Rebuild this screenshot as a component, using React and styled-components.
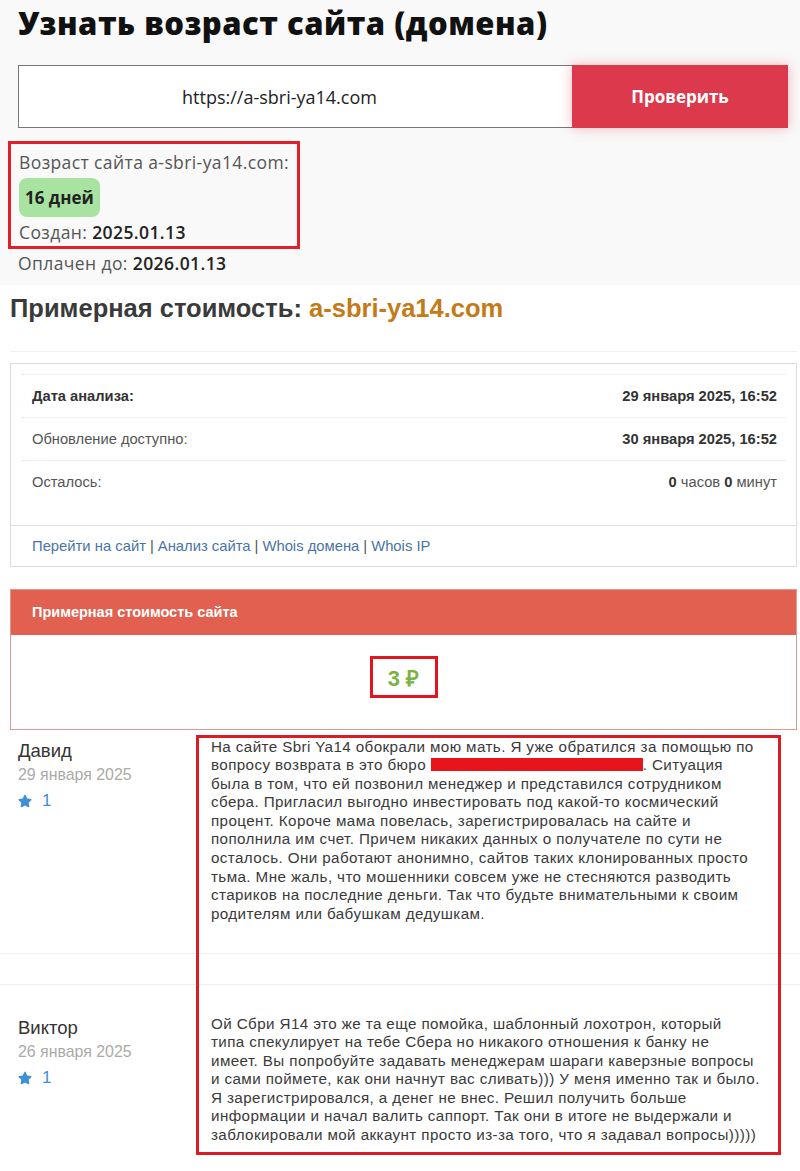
import styled, { createGlobalStyle } from "styled-components";
import { FaStar } from "react-icons/fa";

const GlobalStyle = createGlobalStyle`
  html, body {
    margin: 0;
    padding: 0;
    background: #ffffff;
  }
  * {
    box-sizing: border-box;
  }
`;

const comments = [
  {
    name: "Давид",
    date: "29 января 2025",
    votes: 1,
    top: 8,
    height: 224,
    lines: [
      "На сайте Sbri Ya14 обокрали мою мать. Я уже обратился за помощью по",
      "REDACTED",
      "была в том, что ей позвонил менеджер и представился сотрудником",
      "сбера. Пригласил выгодно инвестировать под какой-то космический",
      "процент. Короче мама повелась, зарегистрировалась на сайте и",
      "пополнила им счет. Причем никаких данных о получателе по сути не",
      "осталось. Они работают анонимно, сайтов таких клонированных просто",
      "тьма. Мне жаль, что мошенники совсем уже не стесняются разводить",
      "стариков на последние деньги. Так что будьте внимательными к своим",
      "родителям или бабушкам дедушкам.",
    ],
  },
  {
    name: "Виктор",
    date: "26 января 2025",
    votes: 1,
    top: 30,
    height: 186,
    lines: [
      "Ой Сбри Я14 это же та еще помойка, шаблонный лохотрон, который",
      "типа спекулирует на тебе Сбера но никакого отношения к банку не",
      "имеет. Вы попробуйте задавать менеджерам шараги каверзные вопросы",
      "и сами поймете, как они начнут вас сливать))) У меня именно так и было.",
      "Я зарегистрировался, а денег не внес. Решил получить больше",
      "информации и начал валить саппорт. Так они в итоге не выдержали и",
      "заблокировали мой аккаунт просто из-за того, что я задавал вопросы)))))",
    ],
  },
];

export default function App() {
  return (
    <Page>
      <GlobalStyle />

      {/* Age checker */}
      <TopSection>
        <Title>Узнать возраст сайта (домена)</Title>
        <SearchForm>
          <UrlInput>https://a-sbri-ya14.com</UrlInput>
          <CheckButton>Проверить</CheckButton>
        </SearchForm>
        <AgeBox>
          <InfoLine>Возраст сайта a-sbri-ya14.com:</InfoLine>
          <AgeBadge>16 дней</AgeBadge>
          <InfoLine>
            Создан: <strong>2025.01.13</strong>
          </InfoLine>
        </AgeBox>
        <PaidLine>
          Оплачен до: <strong>2026.01.13</strong>
        </PaidLine>
      </TopSection>

      {/* Estimated cost */}
      <CostSection>
        <CostTitle>
          Примерная стоимость: <Domain>a-sbri-ya14.com</Domain>
        </CostTitle>
        <Divider />
        <InfoCard>
          <InfoTable>
            <tbody>
              <InfoRow>
                <th>Дата анализа:</th>
                <td>
                  <b>29 января 2025, 16:52</b>
                </td>
              </InfoRow>
              <InfoRow>
                <td>Обновление доступно:</td>
                <td>
                  <b>30 января 2025, 16:52</b>
                </td>
              </InfoRow>
              <InfoRow>
                <td>Осталось:</td>
                <td>
                  <b>0</b> часов <b>0</b> минут
                </td>
              </InfoRow>
            </tbody>
          </InfoTable>
          <CardFooter>
            <a>Перейти на сайт</a> | <a>Анализ сайта</a> | <a>Whois домена</a> |{" "}
            <a>Whois IP</a>
          </CardFooter>
        </InfoCard>

        <PricePanel>
          <PriceHeader>Примерная стоимость сайта</PriceHeader>
          <PriceBody>
            <PriceValue>3 ₽</PriceValue>
          </PriceBody>
        </PricePanel>
      </CostSection>

      {/* Reviews */}
      <Comments>
        {comments.map((c, i) => (
          <div key={i}>
            <Comment $top={c.top} $height={c.height} $last={i === comments.length - 1}>
              <Author>
                <AuthorName>{c.name}</AuthorName>
                <AuthorDate>{c.date}</AuthorDate>
                <Votes>
                  <FaStar />
                  <span>{c.votes}</span>
                </Votes>
              </Author>
              <CommentText>
                {c.lines.map((line, j) =>
                  line === "REDACTED" ? (
                    <div key={j}>
                      вопросу возврата в это бюро <Redacted />. Ситуация
                    </div>
                  ) : (
                    <div key={j}>{line}</div>
                  )
                )}
              </CommentText>
            </Comment>
            {i < comments.length - 1 && <ReplySlot />}
          </div>
        ))}
        <Highlight />
      </Comments>
    </Page>
  );
}

const Page = styled.div`
  width: 800px;
  min-height: 1171px;
  background: #fff;
  font-family: "Liberation Sans", Arial, sans-serif;
  color: #333;
`;

const TopSection = styled.section`
  background: #f9f9f9;
  padding: 5px 12px 10px 18px;
  font-family: "Open Sans", "DejaVu Sans", sans-serif;
`;

const Title = styled.h1`
  margin: 0;
  font-size: 31px;
  line-height: 36px;
  font-weight: 800;
  color: #111;
  letter-spacing: 0.5px;
`;

const SearchForm = styled.div`
  display: flex;
  margin-top: 24px;
  height: 63px;
`;

const UrlInput = styled.div`
  flex: 1;
  display: flex;
  align-items: center;
  justify-content: center;
  background: #fff;
  border: 1px solid #777;
  border-right: none;
  font-size: 18px;
  color: #222;
  padding-right: 32px;
`;

const CheckButton = styled.button`
  width: 216px;
  border: none;
  background: #dc3a4c;
  color: #fff;
  font-family: "Open Sans", sans-serif;
  font-weight: 700;
  font-size: 17px;
  box-shadow: 0 0 12px rgba(230, 60, 70, 0.35);
`;

const AgeBox = styled.div`
  width: 292px;
  margin: 13px 0 0 -10px;
  border: 3px solid #e1202b;
  padding: 6px 8px 2px;
`;

const InfoLine = styled.div`
  font-size: 17.5px;
  letter-spacing: 0.4px;
  line-height: 24px;
  color: #555;
  white-space: nowrap;

  strong {
    color: #222;
    font-weight: 600;
  }
`;

const AgeBadge = styled.div`
  display: inline-flex;
  align-items: center;
  height: 39px;
  margin: 4px 0 3px;
  padding: 0 6px;
  border-radius: 8px;
  background: #a8e3a1;
  font-size: 17px;
  font-weight: 700;
  color: #222;
`;

const PaidLine = styled(InfoLine)`
  margin-top: 2px;
`;

const CostSection = styled.section`
  padding: 0 3px 0 10px;
`;

const CostTitle = styled.h2`
  margin: 0;
  padding-top: 9px;
  font-size: 25.5px;
  line-height: 28px;
  font-weight: 700;
  color: #3a3a3a;
`;

const Domain = styled.span`
  color: #c47a16;
`;

const Divider = styled.hr`
  margin: 29px 0 11px;
  border: none;
  border-top: 1px solid #f0f0f0;
`;

const InfoCard = styled.div`
  border: 1px solid #ddd;
  padding-top: 10px;
`;

const InfoTable = styled.table`
  width: calc(100% - 20px);
  margin: 0 10px 21px;
  border-collapse: collapse;
  font-size: 14.7px;
  color: #555;
`;

const InfoRow = styled.tr`
  height: 43px;
  border-top: 1px solid #eee;

  th,
  td {
    padding: 0 0 0 11px;
    text-align: left;
    font-weight: 400;
    vertical-align: middle;
  }

  th {
    font-weight: 700;
    color: #333;
  }

  td:last-child {
    text-align: right;
    padding: 0 9px 0 0;
  }

  b {
    color: #333;
  }
`;

const CardFooter = styled.div`
  border-top: 1px solid #ddd;
  height: 41px;
  display: flex;
  align-items: center;
  gap: 4px;
  padding-left: 21px;
  font-size: 14.8px;
  color: #555;

  a {
    color: #4a74a6;
    cursor: pointer;
  }
`;

const PricePanel = styled.div`
  margin-top: 22px;
  border: 1px solid #e39a8e;
`;

const PriceHeader = styled.div`
  background: #e2604f;
  height: 45px;
  display: flex;
  align-items: center;
  padding-left: 21px;
  font-size: 14.5px;
  font-weight: 700;
  color: #fff;
`;

const PriceBody = styled.div`
  display: flex;
  justify-content: center;
  padding: 21px 0 31px;
`;

const PriceValue = styled.div`
  width: 68px;
  height: 42px;
  border: 3px solid #e0151f;
  display: flex;
  align-items: center;
  justify-content: center;
  font-size: 22px;
  font-weight: 700;
  color: #7cb342;
`;

const Comments = styled.section`
  position: relative;
`;

const Comment = styled.div`
  display: grid;
  grid-template-columns: 193px 1fr;
  height: ${(p) => p.$height}px;
  padding: ${(p) => p.$top}px 0 0 18px;
  border-bottom: ${(p) => (p.$last ? "none" : "1px solid #eee")};
`;

const ReplySlot = styled.div`
  height: 31px;
  border-bottom: 1px solid #eee;
`;

const Author = styled.div`
  padding-top: 2px;
`;

const AuthorName = styled.div`
  font-size: 18.5px;
  line-height: 22px;
  color: #333;
`;

const AuthorDate = styled.div`
  margin-top: 3px;
  font-size: 15.9px;
  line-height: 19px;
  color: #aaa;
`;

const Votes = styled.div`
  display: flex;
  align-items: center;
  gap: 10px;
  margin-top: 7px;
  color: #3d8fd8;
  font-size: 17px;

  svg {
    width: 14px;
    height: 14px;
  }
`;

const CommentText = styled.div`
  font-size: 15.2px;
  letter-spacing: 0.4px;
  line-height: 18.6px;
  color: #3a3a3a;
  white-space: nowrap;
`;

const Redacted = styled.span`
  display: inline-block;
  width: 212px;
  height: 13px;
  vertical-align: -1px;
  background: #e8141c;
`;

const Highlight = styled.div`
  position: absolute;
  top: 5px;
  left: 196px;
  width: 585px;
  height: 420px;
  border: 3px solid #dc1c24;
  pointer-events: none;
`;
